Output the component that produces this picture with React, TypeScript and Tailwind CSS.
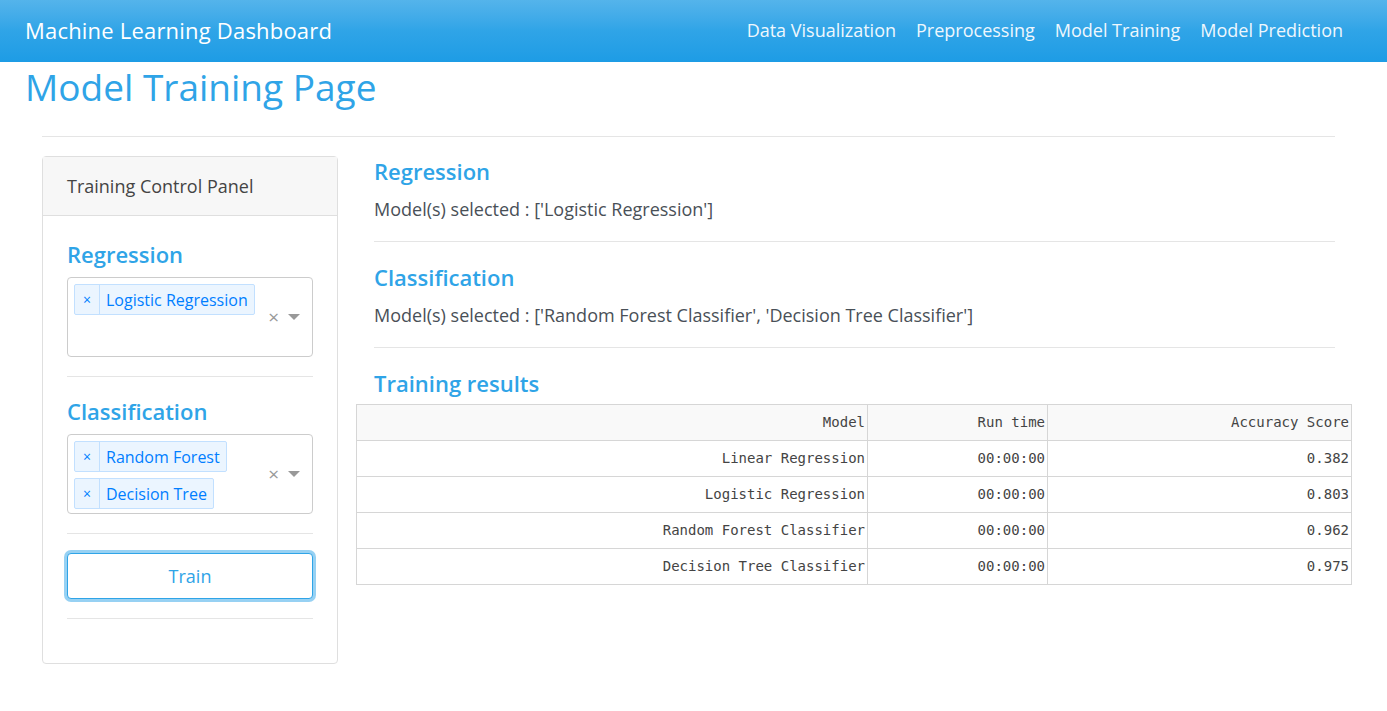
import React from 'react';

// Rows shown in the training results table
const RESULTS = [
  { model: 'Linear Regression', time: '00:00:00', score: '0.382' },
  { model: 'Logistic Regression', time: '00:00:00', score: '0.803' },
  { model: 'Random Forest Classifier', time: '00:00:00', score: '0.962' },
  { model: 'Decision Tree Classifier', time: '00:00:00', score: '0.975' },
];

const NAV_LINKS = ['Data Visualization', 'Preprocessing', 'Model Training', 'Model Prediction'];

const Tag: React.FC<{ label: string }> = ({ label }) => (
  <div className="flex h-[31px] items-stretch rounded-[2px] border border-[#c2e0ff] bg-[#ebf5ff] text-[#007eff]">
    <span className="flex w-[25px] items-center justify-center border-r border-[#c2e0ff] text-[14px]">×</span>
    <span className="flex items-center px-[6px] text-[16px]">{label}</span>
  </div>
);

const MultiSelect: React.FC<{ tags: string[] }> = ({ tags }) => (
  <div className="flex h-[80px] items-stretch rounded-[4px] border border-[#cccccc] bg-white">
    <div className="flex flex-1 flex-col items-start gap-[6px] pl-[6px] pt-[6px]">
      {tags.map((t) => (
        <Tag key={t} label={t} />
      ))}
    </div>
    <div className="flex items-center gap-[9px] pr-[12px]">
      <span className="text-[19px] leading-none text-[#999999]">×</span>
      <svg width="12" height="7" viewBox="0 0 12 7">
        <path d="M0 0 L12 0 L6 6 Z" fill="#999999" />
      </svg>
    </div>
  </div>
);

export default function App() {
  return (
    <div className="min-h-screen bg-white font-['Open_Sans',sans-serif] text-[#495057]">
      {/* Navbar */}
      <nav className="flex h-[62px] items-center justify-between bg-gradient-to-b from-[#54b4eb] via-[#2fa4e7] to-[#1d9ce5] pl-[25px] pr-[44px] text-white">
        <span className="-mt-[2px] text-[22px] tracking-[0.2px]">Machine Learning Dashboard</span>
        <div className="-mt-[2px] flex gap-[20px] text-[18px] text-[#eef7fd]">
          {NAV_LINKS.map((l) => (
            <span key={l}>{l}</span>
          ))}
        </div>
      </nav>

      <h1 className="px-[25px] text-[37px] font-medium leading-[50px] text-[#2fa4e7]">
        Model Training Page
      </h1>

      <div className="pl-[42px] pr-[52px] pt-[24px]">
        <hr className="border-t border-[#e5e5e5]" />

        <div className="mt-[19px] flex">
          {/* Training control panel */}
          <div className="flex h-[508px] w-[296px] shrink-0 flex-col rounded-[4px] border border-[#dfdfdf]">
            <div className="flex h-[59px] items-center border-b border-[#dfdfdf] bg-[#f7f7f7] px-[24px] text-[18px] text-[#444]">
              Training Control Panel
            </div>
            <div className="px-[24px] pt-[23px]">
              <h3 className="mb-[8px] text-[22px] font-semibold leading-[30px] text-[#2fa4e7]">Regression</h3>
              <MultiSelect tags={['Logistic Regression']} />
              <hr className="my-[19px] border-t border-[#e5e5e5]" />
              <h3 className="mb-[8px] text-[22px] font-semibold leading-[30px] text-[#2fa4e7]">Classification</h3>
              <MultiSelect tags={['Random Forest', 'Decision Tree']} />
              <hr className="my-[19px] border-t border-[#e5e5e5]" />
              <button className="h-[46px] w-full rounded-[4px] border border-[#2fa4e7] bg-white text-[18px] text-[#2fa4e7] ring-[3px] ring-[#2fa4e7]/50">
                Train
              </button>
              <hr className="mt-[19px] border-t border-[#e5e5e5]" />
            </div>
          </div>

          {/* Results column */}
          <div className="ml-[36px] min-w-0 flex-1">
            <h3 className="text-[22px] font-semibold leading-[30px] text-[#2fa4e7]">Regression</h3>
            <p className="mt-[10px] text-[18px] leading-[26px]">Model(s) selected : ['Logistic Regression']</p>
            <hr className="mt-[19px] border-t border-[#e5e5e5]" />
            <h3 className="mt-[20px] text-[22px] font-semibold leading-[30px] text-[#2fa4e7]">Classification</h3>
            <p className="mt-[10px] text-[18px] leading-[26px]">
              Model(s) selected : ['Random Forest Classifier', 'Decision Tree Classifier']
            </p>
            <hr className="mt-[19px] border-t border-[#e5e5e5]" />
            <h3 className="mt-[20px] text-[22px] font-semibold leading-[30px] text-[#2fa4e7]">Training results</h3>

            <table className="-ml-[18px] mt-[6px] w-[calc(100%+35px)] border-collapse font-['DejaVu_Sans_Mono',monospace] text-[14px] text-[#444]">
              <thead>
                <tr className="h-[36px] bg-[#f9f9f9]">
                  <th className="w-[511px] border border-[#d6d6d6] px-[2px] text-right font-normal">Model</th>
                  <th className="w-[180px] border border-[#d6d6d6] px-[2px] text-right font-normal">Run time</th>
                  <th className="border border-[#d6d6d6] px-[2px] text-right font-normal">Accuracy Score</th>
                </tr>
              </thead>
              <tbody>
                {RESULTS.map((r) => (
                  <tr key={r.model} className="h-[36px]">
                    <td className="border border-[#d6d6d6] px-[2px] text-right">{r.model}</td>
                    <td className="border border-[#d6d6d6] px-[2px] text-right">{r.time}</td>
                    <td className="border border-[#d6d6d6] px-[2px] text-right">{r.score}</td>
                  </tr>
                ))}
              </tbody>
            </table>
          </div>
        </div>
      </div>
    </div>
  );
}
